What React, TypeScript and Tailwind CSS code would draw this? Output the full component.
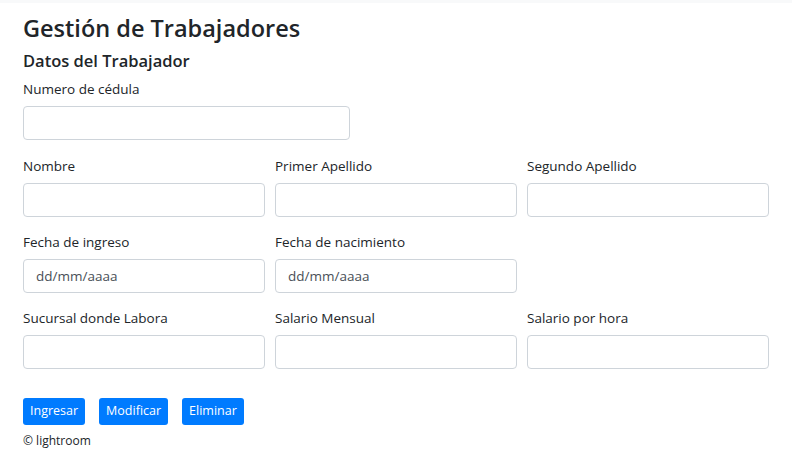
// App.tsx
// Worker management form (Gestión de Trabajadores)

const font = "font-['Open_Sans','Noto_Sans',sans-serif]";

function Field({ label, date = false }: { label: string; date?: boolean }) {
  return (
    <div className="flex flex-col">
      <label className="text-[13.5px] leading-[20px] mb-[7px] text-[#212529]">{label}</label>
      <input
        type="text"
        placeholder={date ? "dd/mm/aaaa" : ""}
        className="h-[34px] w-full rounded-[4px] border border-[#ced4da] bg-white px-3 text-[13.5px] text-[#495057] placeholder:text-[#495057] outline-none"
      />
    </div>
  );
}

const btn = "h-[27px] rounded-[3px] bg-[#007bff] px-[7px] text-[12.5px] text-white";

export default function App() {
  return (
    <div className={`min-h-screen bg-white text-[#212529] ${font}`}>
      <div className="h-[3px] bg-[#f8f9fa]" />
      <div className="px-[23px]">
        <h1 className="mt-[10px] text-[23.5px] leading-[30px] font-semibold">Gestión de Trabajadores</h1>
        <h2 className="mt-[7px] text-[16.5px] leading-[22px] font-semibold">Datos del Trabajador</h2>

        <div className="mt-[7px] w-[327px] mb-[16px]">
          <Field label="Numero de cédula" />
        </div>

        <div className="grid grid-cols-3 gap-x-[10px] gap-y-[15px]">
          <Field label="Nombre" />
          <Field label="Primer Apellido" />
          <Field label="Segundo Apellido" />
          <Field label="Fecha de ingreso" date />
          <Field label="Fecha de nacimiento" date />
          <div />
          <Field label="Sucursal donde Labora" />
          <Field label="Salario Mensual" />
          <Field label="Salario por hora" />
        </div>

        <div className="mt-[29px] flex gap-[14px]">
          <button className={btn}>Ingresar</button>
          <button className={btn}>Modificar</button>
          <button className={btn}>Eliminar</button>
        </div>

        <p className="mt-[7px] text-[12px] leading-[18px]">© lightroom</p>
      </div>
    </div>
  );
}
